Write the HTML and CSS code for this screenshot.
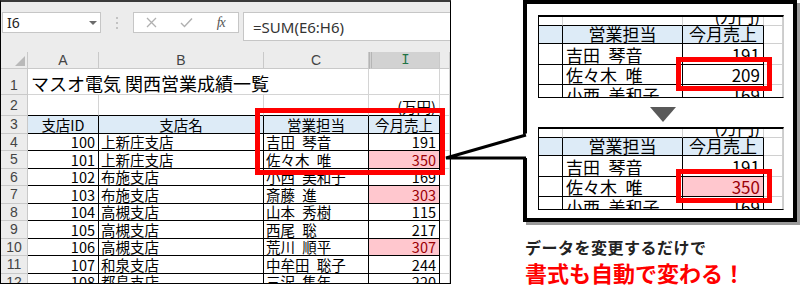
FILE: index.html
```html
<!DOCTYPE html>
<html lang="ja">
<head>
  <meta charset="UTF-8">
  <title>条件付き書式</title>
  <link rel="stylesheet" href="styles.css">
</head>
<body>

<div class="page">
  <div class="excel">
    <div class="fbar">
      <div class="namebox"><span>I6</span><span class="dd"></span></div>
      <div class="grip">
        <svg width="4" height="14" viewBox="0 0 4 14"><circle cx="2" cy="2" r="1" fill="#b4b4b4"/><circle cx="2" cy="7" r="1" fill="#b4b4b4"/><circle cx="2" cy="12" r="1" fill="#b4b4b4"/></svg>
      </div>
      <div class="fbtns">
        <span><svg width="11" height="11" viewBox="0 0 11 11"><path d="M1 1L10 10M10 1L1 10" stroke="#b0b0b0" stroke-width="1.3" fill="none"/></svg></span>
        <span><svg width="13" height="11" viewBox="0 0 13 11"><path d="M1 6L4.5 9.5L12 1.5" stroke="#b0b0b0" stroke-width="1.4" fill="none"/></svg></span>
        <span class="fx">fx</span>
      </div>
      <div class="formula">=SUM(E6:H6)</div>
    </div>

    <div class="sheet">
      <div class="c hd corner"><span class="tri"></span></div>
      <div class="c hd">A</div>
      <div class="c hd">B</div>
      <div class="c hd">C</div>
      <div class="c hd sel">I</div>
      <div class="c hd"></div>

      <div class="c rn r1">1</div>
      <div class="c title">マスオ電気 関西営業成績一覧</div>
      <div class="c"></div>
      <div class="c"></div>

      <div class="c rn">2</div>
      <div class="c top"></div>
      <div class="c top"></div>
      <div class="c top"></div>
      <div class="c top num">(万円)</div>
      <div class="c"></div>

      <div class="c rn">3</div>
      <div class="c t th">支店ID</div>
      <div class="c t th">支店名</div>
      <div class="c t th">営業担当</div>
      <div class="c t th">今月売上</div>
      <div class="c"></div>

      <div class="c rn">4</div>
      <div class="c t num">100</div>
      <div class="c t">上新庄支店</div>
      <div class="c t">吉田&ensp;琴音</div>
      <div class="c t num">191</div>
      <div class="c"></div>

      <div class="c rn">5</div>
      <div class="c t num">101</div>
      <div class="c t">上新庄支店</div>
      <div class="c t">佐々木&ensp;唯</div>
      <div class="c t num hot">350</div>
      <div class="c"></div>

      <div class="c rn">6</div>
      <div class="c t num">102</div>
      <div class="c t">布施支店</div>
      <div class="c t">小西&ensp;美和子</div>
      <div class="c t num">169</div>
      <div class="c"></div>

      <div class="c rn">7</div>
      <div class="c t num">103</div>
      <div class="c t">布施支店</div>
      <div class="c t">斎藤&ensp;進</div>
      <div class="c t num hot">303</div>
      <div class="c"></div>

      <div class="c rn">8</div>
      <div class="c t num">104</div>
      <div class="c t">高槻支店</div>
      <div class="c t">山本&ensp;秀樹</div>
      <div class="c t num">115</div>
      <div class="c"></div>

      <div class="c rn">9</div>
      <div class="c t num">105</div>
      <div class="c t">高槻支店</div>
      <div class="c t">西尾&ensp;聡</div>
      <div class="c t num">217</div>
      <div class="c"></div>

      <div class="c rn">10</div>
      <div class="c t num">106</div>
      <div class="c t">高槻支店</div>
      <div class="c t">荒川&ensp;順平</div>
      <div class="c t num hot">307</div>
      <div class="c"></div>

      <div class="c rn">11</div>
      <div class="c t num">107</div>
      <div class="c t">和泉支店</div>
      <div class="c t">中牟田&ensp;聡子</div>
      <div class="c t num">244</div>
      <div class="c"></div>

      <div class="c rn">12</div>
      <div class="c t num">108</div>
      <div class="c t">都島支店</div>
      <div class="c t">三沢&ensp;隼年</div>
      <div class="c t num">220</div>
      <div class="c"></div>
    </div>

    <!-- 強調の赤枠 -->
    <div class="redbox"></div>
  </div>

  <div class="side">
    <div class="callout">
      <div class="snip">
        <div class="s g"></div><div class="s g"></div><div class="s g num">(万円)</div><div class="s x"></div>
        <div class="s th"></div><div class="s th">営業担当</div><div class="s th">今月売上</div><div class="s x"></div>
        <div class="s"></div><div class="s">吉田&ensp;琴音</div><div class="s num">191</div><div class="s x"></div>
        <div class="s"></div><div class="s">佐々木&ensp;唯</div><div class="s num">209</div><div class="s x"></div>
        <div class="s"></div><div class="s">小西&ensp;美和子</div><div class="s num">169</div><div class="s x"></div>
        <div class="snipbox"></div>
      </div>
      <div class="down"></div>
      <div class="snip">
        <div class="s g"></div><div class="s g"></div><div class="s g num">(万円)</div><div class="s x"></div>
        <div class="s th"></div><div class="s th">営業担当</div><div class="s th">今月売上</div><div class="s x"></div>
        <div class="s"></div><div class="s">吉田&ensp;琴音</div><div class="s num">191</div><div class="s x"></div>
        <div class="s"></div><div class="s">佐々木&ensp;唯</div><div class="s num hot">350</div><div class="s x"></div>
        <div class="s"></div><div class="s">小西&ensp;美和子</div><div class="s num">169</div><div class="s x"></div>
        <div class="snipbox"></div>
      </div>
    </div>
    <p class="lead">データを変更するだけで</p>
    <p class="catch">書式も自動で変わる！</p>
  </div>

  <!-- 吹き出しの口 -->
  <svg class="pointer" width="90" height="34" viewBox="0 0 90 34">
    <polygon points="6,30 88,5 88,30" fill="#fff"/>
    <path d="M86 7L6 30L86 30" stroke="#000" stroke-width="3" fill="none"/>
  </svg>
</div>

</body>
</html>
```

FILE: styles.css
```css
body {
  margin: 0;
  font-family: "Noto Sans CJK JP", sans-serif;
  background-color: #fff;
  color: #000;
}

.page {
  position: relative;
  display: flex;
  width: 800px;
  height: 286px;
}

/* Excel の画面 */
.excel {
  position: relative;
  width: 451px;
  height: 284px;
  box-sizing: border-box;
  border: 1px solid #000;
  border-top: 2px solid #3a3a3a;
  overflow: hidden;
  background-color: #ececec;
}

.fbar {
  display: flex;
  align-items: flex-start;
  height: 50px;
  box-sizing: border-box;
  padding: 10px 0 0 1px;
}

.namebox {
  width: 99px;
  height: 21px;
  box-sizing: border-box;
  border: 1px solid #c6c6c6;
  background-color: #fff;
  display: flex;
  align-items: center;
  justify-content: space-between;
  padding: 0 3px 0 4px;
  font-family: "Noto Sans", sans-serif;
  font-size: 14px;
  color: #222;
}

.dd {
  width: 0;
  height: 0;
  border-left: 4px solid transparent;
  border-right: 4px solid transparent;
  border-top: 4px solid #6b6b6b;
}

.grip {
  width: 32px;
  height: 21px;
  display: flex;
  align-items: center;
  justify-content: center;
}

.fbtns {
  width: 106px;
  height: 21px;
  box-sizing: border-box;
  border: 1px solid #c6c6c6;
  background-color: #fff;
  display: flex;
}

.fbtns span {
  flex: 1;
  display: flex;
  align-items: center;
  justify-content: center;
}

.fbtns .fx {
  font-family: "Liberation Serif", serif;
  font-style: italic;
  font-size: 14px;
  color: #555;
  letter-spacing: -1px;
}

.formula {
  flex: 1;
  height: 29px;
  margin-left: 4px;
  box-sizing: border-box;
  border: 1px solid #c6c6c6;
  border-right: none;
  background-color: #fff;
  display: flex;
  align-items: center;
  padding-left: 9px;
  font-family: "Noto Sans", sans-serif;
  font-size: 15px;
  color: #333;
}

.sheet {
  display: grid;
  grid-template-columns: 27px 71px 165px 105px 71px 10px;
  grid-template-rows: 17px 26px 21px repeat(10, 17.5px);
  background-color: #fff;
}

.c {
  box-sizing: border-box;
  border-right: 1px solid #d4d4d4;
  border-bottom: 1px solid #d4d4d4;
  display: flex;
  align-items: flex-end;
  padding: 0 2px;
  font-size: 14.5px;
  line-height: 16px;
  white-space: pre;
}

.hd {
  background-color: #ececec;
  border-color: #c9c9c9;
  align-items: center;
  justify-content: center;
  font-family: "Liberation Sans", sans-serif;
  font-size: 14px;
  color: #444;
}

.hd.sel {
  background-color: #d2d2d2;
  border-left: 3px double #b5b5b5;
  color: #217346;
  font-family: "Liberation Mono", monospace;
}

.corner {
  justify-content: flex-end;
  align-items: flex-end;
  padding: 0 2px 2px 0;
}

.tri {
  width: 0;
  height: 0;
  border-left: 10px solid transparent;
  border-bottom: 10px solid #b9b9b9;
}

.rn {
  background-color: #ececec;
  border-color: #c9c9c9;
  justify-content: center;
  align-items: center;
  font-family: "Liberation Sans", sans-serif;
  font-size: 14px;
  color: #444;
}

.rn.r1 {
  align-items: flex-end;
  padding-bottom: 1px;
}

.title {
  grid-column: span 3;
  font-size: 18px;
  line-height: 20px;
  padding-left: 3px;
  padding-bottom: 1px;
}

.top {
  border-bottom-color: #000;
}

.t {
  border-right-color: #000;
  border-bottom-color: #000;
}

.th {
  background-color: #ddebf7;
  justify-content: center;
}

.num {
  justify-content: flex-end;
  padding-right: 3px;
}

.hot {
  background-color: #ffc7ce;
  color: #9c0006;
}

.redbox {
  position: absolute;
  left: 254px;
  top: 106px;
  width: 190px;
  height: 67px;
  box-sizing: border-box;
  border: 5px solid #f00;
}

/* 右側の吹き出し */
.side {
  margin-left: 72px;
  display: flex;
  flex-direction: column;
}

.callout {
  width: 274px;
  height: 222px;
  box-sizing: border-box;
  border: 4px solid #000;
  box-shadow: 3px 3px 0 #9a9a9a;
  padding: 11px 0 0 11px;
  background-color: #fff;
  display: flex;
  flex-direction: column;
}

.snip {
  position: relative;
  width: 246px;
  height: 83px;
  box-sizing: border-box;
  border: 1px solid #000;
  border-top-width: 2px;
  border-right-color: #ccc;
  display: grid;
  grid-template-columns: 24px 120px 81px 19px;
  grid-template-rows: 9px 18px 21px 20px 20px;
  overflow: hidden;
  background-color: #fff;
}

.s {
  box-sizing: border-box;
  border-right: 1px solid #000;
  border-bottom: 1px solid #000;
  display: flex;
  align-items: flex-end;
  padding: 0 3px;
  font-size: 17px;
  line-height: 18px;
  white-space: pre;
}

.s.g {
  border-right-color: #d0d0d0;
  overflow: hidden;
}

.s.x {
  border-color: #d0d0d0;
}

.snipbox {
  position: absolute;
  left: 137px;
  top: 40px;
  width: 96px;
  height: 34px;
  box-sizing: border-box;
  border: 5px solid #f00;
}

.down {
  width: 0;
  height: 0;
  margin: 9px 0 5px 112px;
  border-left: 13px solid transparent;
  border-right: 13px solid transparent;
  border-top: 15px solid #595959;
}

.lead {
  margin: 15px 0 0 2px;
  font-size: 16px;
  font-weight: 700;
  line-height: 20px;
  letter-spacing: 0.5px;
  color: #222;
}

.catch {
  margin: 2px 0 0 2px;
  font-size: 22px;
  font-weight: 700;
  line-height: 26px;
  color: #f00;
}

.pointer {
  position: absolute;
  left: 440px;
  top: 128px;
}
```
